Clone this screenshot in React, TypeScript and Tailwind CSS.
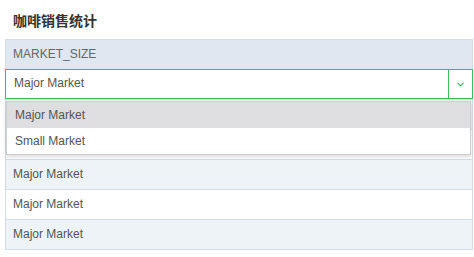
import { ChevronDown } from "lucide-react";

const rows = ["Major Market", "Major Market", "Major Market", "Major Market", "Major Market"];

export default function App() {
  return (
    <div className="w-[474px] h-[257px] bg-white font-['Liberation_Sans','Noto_Sans_CJK_SC',sans-serif] text-[12px] text-[#555]">
      <h1 className="pl-[13px] pt-[13px] h-[39px] text-[14px] leading-[17px] font-bold text-[#333]">
        咖啡销售统计
      </h1>
      <div className="relative ml-[5px] mr-[1px] border border-t-0 border-[#d5dde4]">
        <div className="h-[30px] flex items-center pl-[7px] pb-[2px] bg-[#dfe8f1] border-t border-[#d5dde4] text-[#666]">
          MARKET_SIZE
        </div>
        <div className="h-[30px] flex border border-[#3bbf5c] -mx-px bg-white">
          <div className="flex-1 flex items-center pl-[8px] pb-[2px]">Major Market</div>
          <div className="w-[24px] flex items-center justify-center border-l border-[#3bbf5c]">
            <ChevronDown size={11} strokeWidth={2.5} className="text-[#3bbf5c]" />
          </div>
        </div>
        {rows.map((r, i) => (
          <div
            key={i}
            className={
              "h-[30px] flex items-center pl-[7px] pb-[2px] border-t border-[#d5dde4] " +
              (i % 2 === 0 ? "bg-[#eef3f7]" : "bg-white")
            }
          >
            {r}
          </div>
        ))}
        <div className="absolute left-0 right-[1px] top-[62px] bg-white border border-[#cfcfcf] shadow-[0_2px_4px_rgba(0,0,0,0.15)]">
          <div className="h-[26px] flex items-center pl-[8px] pb-[1px] bg-[#dedee0]">Major Market</div>
          <div className="h-[26px] flex items-center pl-[8px] pb-[1px] bg-white">Small Market</div>
        </div>
      </div>
    </div>
  );
}
